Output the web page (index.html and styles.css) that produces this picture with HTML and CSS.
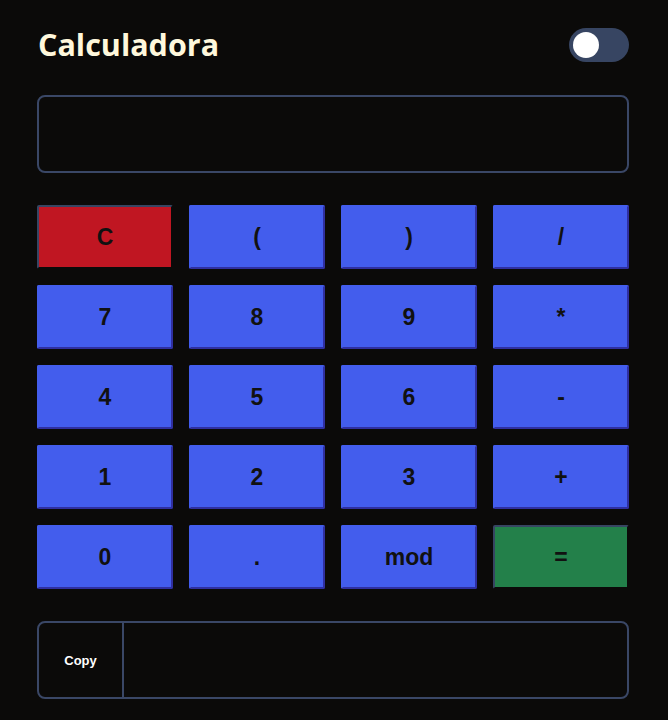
FILE: index.html
```html
<!DOCTYPE html>
<html lang="es">
<head>
<meta charset="utf-8">
<link rel="stylesheet" href="styles.css">
</head>
<body>
<main class="calc">
  <header class="header">
    <h1 class="title">Calculadora</h1>
    <div class="toggle"><span class="knob"></span></div>
  </header>
  <div class="display"></div>
  <div class="keys">
    <button class="key key-clear">C</button>
    <button class="key">(</button>
    <button class="key">)</button>
    <button class="key">/</button>
    <button class="key">7</button>
    <button class="key">8</button>
    <button class="key">9</button>
    <button class="key">*</button>
    <button class="key">4</button>
    <button class="key">5</button>
    <button class="key">6</button>
    <button class="key">-</button>
    <button class="key">1</button>
    <button class="key">2</button>
    <button class="key">3</button>
    <button class="key">+</button>
    <button class="key">0</button>
    <button class="key">.</button>
    <button class="key">mod</button>
    <button class="key key-equals">=</button>
  </div>
  <div class="result">
    <button class="copy">Copy</button>
    <div class="result-value"></div>
  </div>
</main>
</body>
</html>
```

FILE: styles.css
```css
html, body {
  margin: 0;
  padding: 0;
  background: #0b0a09;
}
body {
  font-family: "Liberation Sans", Arial, sans-serif;
}
.calc {
  padding: 24px 39px 0 37px;
  display: flex;
  flex-direction: column;
}
.header {
  display: flex;
  align-items: center;
  justify-content: space-between;
  height: 42px;
}
.title {
  margin: 0 0 3px 1px;
  font-family: "Open Sans", sans-serif;
  font-weight: 700;
  font-size: 30.5px;
  color: #fff8dc;
  letter-spacing: 0;
}
.toggle {
  width: 60px;
  height: 34px;
  border-radius: 17px;
  background: #374562;
  display: flex;
  align-items: center;
  padding-left: 4px;
  box-sizing: border-box;
}
.knob {
  width: 26px;
  height: 26px;
  border-radius: 50%;
  background: #ffffff;
}
.display {
  margin-top: 29px;
  height: 78px;
  box-sizing: border-box;
  border: 2px solid #3a4766;
  border-radius: 8px;
}
.keys {
  margin-top: 32px;
  display: grid;
  grid-template-columns: repeat(4, 136px);
  grid-auto-rows: 64px;
  column-gap: 16px;
  row-gap: 16px;
}
.key {
  margin: 0;
  padding: 0;
  font-family: "Liberation Sans", Arial, sans-serif;
  font-weight: 700;
  font-size: 23px;
  color: #111111;
  background: #435ded;
  border-style: solid;
  border-width: 2px;
  border-color: #435ded #2f2fa0 #2f2fa0 #435ded;
  border-radius: 2px;
}
.key-clear {
  background: #c01622 padding-box;
  border-color: #374562 transparent transparent #374562;
}
.key-equals {
  background: #23804a padding-box;
  border-color: #374562 transparent transparent #374562;
}
.result {
  margin-top: 32px;
  height: 78px;
  box-sizing: border-box;
  border: 2px solid #3a4766;
  border-radius: 8px;
  display: flex;
}
.copy {
  width: 85px;
  margin: 0;
  padding: 0;
  background: transparent;
  border: none;
  border-right: 2px solid #3a4766;
  color: #ffffff;
  font-family: "Liberation Sans", Arial, sans-serif;
  font-weight: 700;
  font-size: 13px;
}
.result-value {
  flex: 1;
}
```
